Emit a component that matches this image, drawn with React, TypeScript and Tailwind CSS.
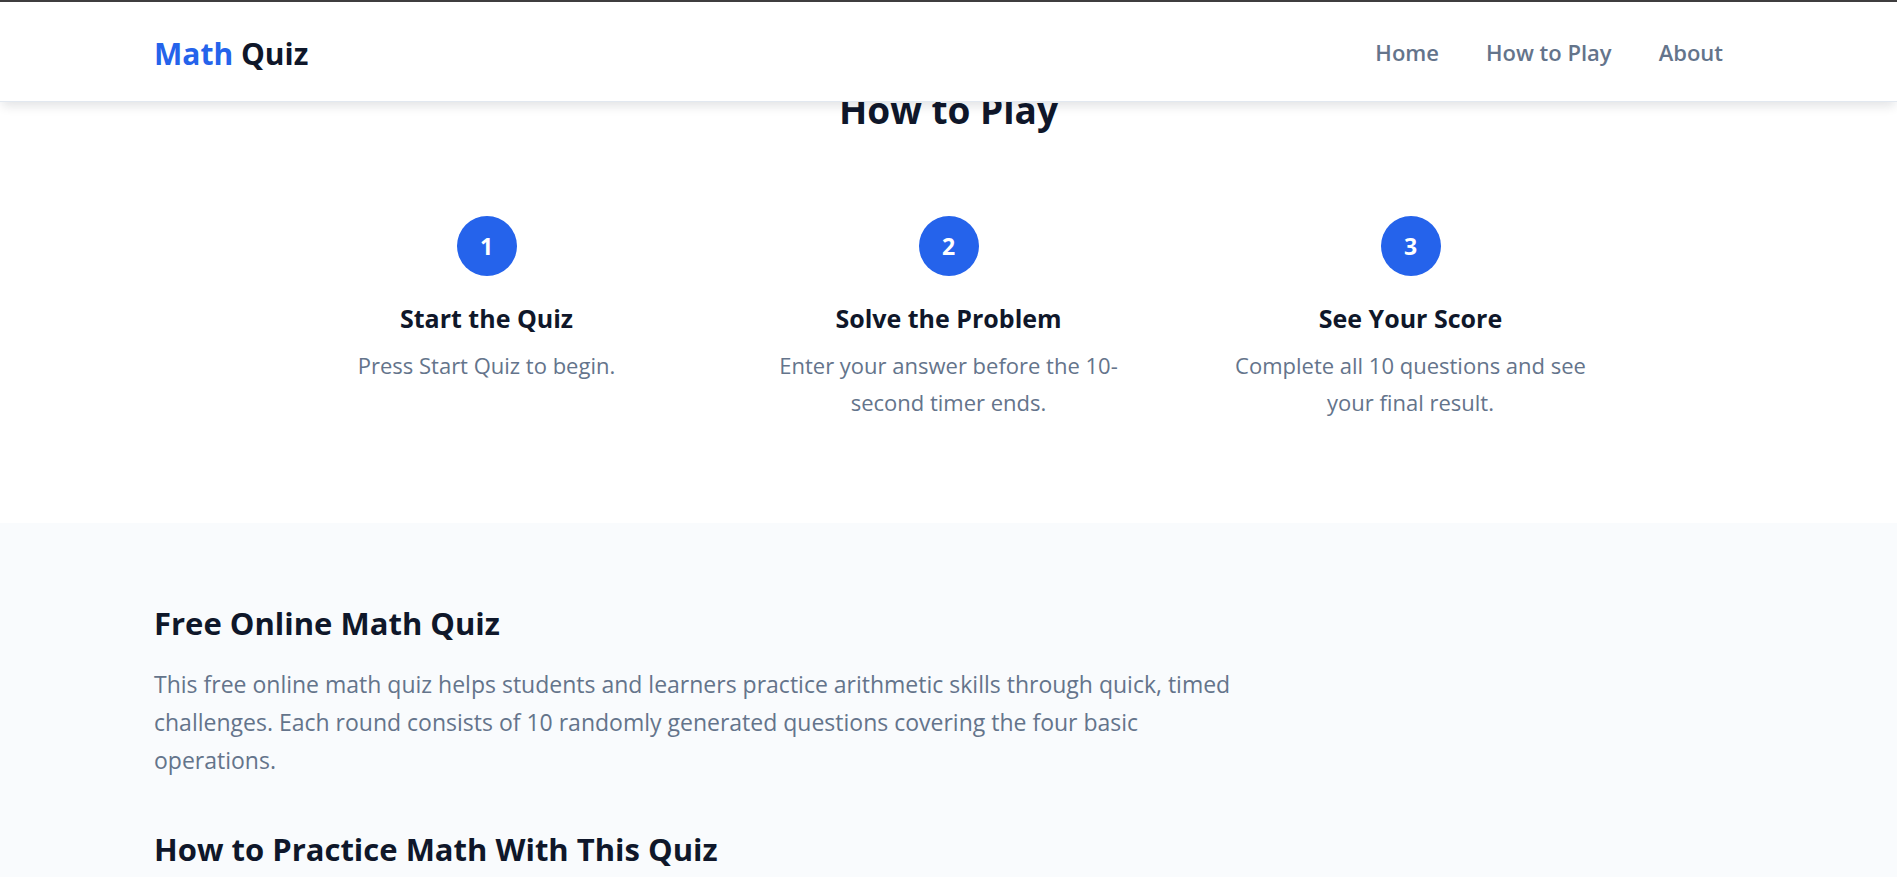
type Step = { title: string; text: string };

const links = [
  { label: "Home", href: "#home" },
  { label: "How to Play", href: "#how-to-play" },
  { label: "About", href: "#about" },
];

const steps: Step[] = [
  { title: "Start the Quiz", text: "Press Start Quiz to begin." },
  { title: "Solve the Problem", text: "Enter your answer before the 10-second timer ends." },
  { title: "See Your Score", text: "Complete all 10 questions and see your final result." },
];

function Header() {
  return (
    <header className="sticky top-0 z-10 border-t-2 border-b border-t-[#3f3d3f] border-b-slate-200 bg-white shadow-[0_6px_10px_-2px_rgba(15,23,42,0.12)]">
      <div className="mx-auto flex h-[99px] max-w-[1589px] items-center justify-between">
        <a href="#home" className="pt-1 text-[30px] leading-10 font-bold text-[#0f172a]">
          <span className="text-[#2563eb]">Math</span> Quiz
        </a>
        <nav className="flex gap-[7px]">
          {links.map((link) => (
            <a key={link.label} href={link.href} className="px-5 text-[22px] leading-8 font-semibold text-[#64748b]">
              {link.label}
            </a>
          ))}
        </nav>
      </div>
    </header>
  );
}

function HowToPlay() {
  return (
    <section id="how-to-play" className="bg-white pb-[102px]">
      <h2 className="-mt-4 text-center text-[37px] leading-[48px] font-bold text-[#0f172a]">How to Play</h2>
      <ol className="mx-auto mt-[82px] grid max-w-[1326px] grid-cols-3 gap-[60px]">
        {steps.map((step, index) => (
          <li key={step.title} className="flex flex-col items-center px-4 text-center">
            <span className="flex size-[60px] items-center justify-center rounded-full bg-[#2563eb] text-[23px] font-bold text-white">
              {index + 1}
            </span>
            <h3 className="mt-[23px] text-[25px] leading-[38px] font-bold text-[#0f172a]">{step.title}</h3>
            <p className="mt-[10px] text-[22px] leading-[37px] text-[#64748b]">{step.text}</p>
          </li>
        ))}
      </ol>
    </section>
  );
}

function About() {
  return (
    <section id="about" className="grow bg-[#f9fbfd] pt-20">
      <div className="mx-auto max-w-[1589px]">
        <div className="flex max-w-[1090px] flex-col gap-[50px]">
          <article>
            <h2 className="text-[31px] leading-10 font-bold text-[#0f172a]">Free Online Math Quiz</h2>
            <p className="mt-[22px] text-[23px] leading-[38px] text-[#64748b]">
              This free online math quiz helps students and learners practice arithmetic skills through quick, timed
              challenges. Each round consists of 10 randomly generated questions covering the four basic operations.
            </p>
          </article>
          <article>
            <h2 className="text-[31px] leading-10 font-bold text-[#0f172a]">How to Practice Math With This Quiz</h2>
          </article>
        </div>
      </div>
    </section>
  );
}

export default function App() {
  return (
    <div className="flex h-screen flex-col overflow-hidden bg-white font-['Open_Sans','Noto_Sans',sans-serif]">
      <Header />
      <main className="flex grow flex-col">
        <HowToPlay />
        <About />
      </main>
    </div>
  );
}
